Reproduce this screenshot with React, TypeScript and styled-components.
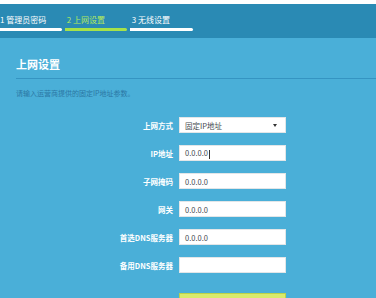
import React, { FC } from 'react';
import styled, { createGlobalStyle } from 'styled-components';

const GlobalStyle = createGlobalStyle`
  html, body {
    margin: 0;
    padding: 0;
    background: #ffffff;
  }
  body {
    font-family: "Noto Sans CJK SC", "Noto Sans", "Liberation Sans", sans-serif;
  }
`;

const Page = styled.div`
  width: 376px;
  height: 298px;
  overflow: hidden;
  background: #4aafd8;
  border-top: 4px solid #ffffff;
  box-sizing: border-box;
`;

const StepBar = styled.div`
  display: flex;
  gap: 3px;
  height: 34px;
  padding-top: 10px;
  box-sizing: border-box;
  background: #2a8ab4;
`;

const Step = styled.div<{ $active?: boolean; $width: number }>`
  display: flex;
  flex-direction: column;
  width: ${(p) => p.$width}px;
  color: ${(p) => (p.$active ? '#b4ea5c' : '#ffffff')};
  font-size: 8px;
  line-height: 12px;
  white-space: nowrap;
`;

const StepLine = styled.div<{ $active?: boolean }>`
  margin-top: 2px;
  height: 2.5px;
  border-radius: 0 2px 2px 0;
  background: ${(p) => (p.$active ? '#a6e24a' : '#ffffff')};
`;

const Content = styled.div`
  padding: 19px 0 0 16px;
`;

const Title = styled.h2`
  margin: 0;
  font-size: 11px;
  line-height: 14px;
  font-weight: 700;
  color: #ffffff;
`;

const Divider = styled.div`
  margin-top: 7px;
  height: 1px;
  background: #3594c2;
`;

const Hint = styled.p`
  margin: 9px 0 0;
  font-size: 7px;
  line-height: 10px;
  color: #2b77a4;
`;

const Form = styled.div`
  display: grid;
  grid-template-columns: 157px 107px;
  column-gap: 6px;
  row-gap: 12px;
  margin-top: 19px;
  align-items: center;
`;

const Label = styled.label`
  text-align: right;
  font-size: 7.5px;
  font-weight: 700;
  color: #ffffff;
  white-space: nowrap;
`;

const Field = styled.div`
  display: flex;
  align-items: center;
  justify-content: space-between;
  height: 16px;
  padding: 0 5px;
  box-sizing: border-box;
  background: #ffffff;
  border: 1px solid #e2e6e8;
  font-size: 7.5px;
  color: #444a4f;
`;

const Caret = styled.span`
  display: inline-block;
  width: 0.6px;
  height: 9px;
  margin-left: 1px;
  background: #333;
  vertical-align: middle;
`;

const Arrow = styled.span`
  width: 0;
  height: 0;
  margin-right: 3px;
  border-left: 2px solid transparent;
  border-right: 2px solid transparent;
  border-top: 3px solid #333;
`;

const SaveButton = styled.div`
  grid-column: 2;
  height: 18px;
  margin-top: 8px;
  background: #d9ea6c;
  border: 1px solid #bcd24a;
  box-sizing: border-box;
`;

const rows = [
  { label: 'IP地址', value: '0.0.0.0', caret: true },
  { label: '子网掩码', value: '0.0.0.0' },
  { label: '网关', value: '0.0.0.0' },
  { label: '首选DNS服务器', value: '0.0.0.0' },
  { label: '备用DNS服务器', value: '' },
];

const App: FC = function App() {
  return (
    <>
      <GlobalStyle />
      <Page>
        <StepBar>
          <Step $width={62}>
            1 管理员密码
            <StepLine />
          </Step>
          <Step $width={62} $active>
            <span>&nbsp;2 上网设置</span>
            <StepLine $active />
          </Step>
          <Step $width={63}>
            <span>&nbsp;3 无线设置</span>
            <StepLine />
          </Step>
        </StepBar>

        <Content>
          <Title>上网设置</Title>
          <Divider />
          <Hint>请输入运营商提供的固定IP地址参数。</Hint>

          <Form>
            <Label>上网方式</Label>
            <Field>
              <span>固定IP地址</span>
              <Arrow />
            </Field>

            {rows.map((row) => (
              <React.Fragment key={row.label}>
                <Label>{row.label}</Label>
                <Field>
                  <span>
                    {row.value}
                    {row.caret && <Caret />}
                  </span>
                </Field>
              </React.Fragment>
            ))}

            <SaveButton />
          </Form>
        </Content>
      </Page>
    </>
  );
};

export default App;
